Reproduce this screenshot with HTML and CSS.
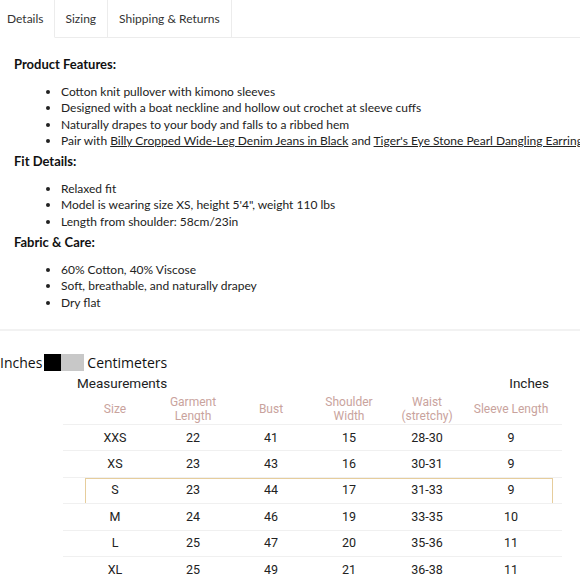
FILE: index.html
```html
<!DOCTYPE html>
<html>
<head>
<meta charset="utf-8">
<link rel="stylesheet" href="styles.css">
</head>
<body>
<div class="page">
  <div class="tabs">
    <div class="tab tab-first active">Details</div>
    <div class="tab">Sizing</div>
    <div class="tab">Shipping &amp; Returns</div>
    <div class="tab-rest"></div>
  </div>
  <div class="details">
    <h3 class="heading">Product Features:</h3>
    <ul class="list">
      <li>Cotton knit pullover with kimono sleeves</li>
      <li>Designed with a boat neckline and hollow out crochet at sleeve cuffs</li>
      <li>Naturally drapes to your body and falls to a ribbed hem</li>
      <li>Pair with <a href="#">Billy Cropped Wide-Leg Denim Jeans in Black</a> and <a href="#">Tiger's Eye Stone Pearl Dangling Earrings</a></li>
    </ul>
    <h3 class="heading">Fit Details:</h3>
    <ul class="list">
      <li>Relaxed fit</li>
      <li>Model is wearing size XS, height 5'4", weight 110 lbs</li>
      <li>Length from shoulder: 58cm/23in</li>
    </ul>
    <h3 class="heading">Fabric &amp; Care:</h3>
    <ul class="list">
      <li>60% Cotton, 40% Viscose</li>
      <li>Soft, breathable, and naturally drapey</li>
      <li>Dry flat</li>
    </ul>
  </div>
  <div class="divider"></div>
  <div class="units">
    <span>Inches</span>
    <span class="switch"><span class="sw-on"></span><span class="sw-off"></span></span>
    <span class="cm">Centimeters</span>
  </div>
  <div class="chart">
    <div class="chart-top">
      <span>Measurements</span>
      <span>Inches</span>
    </div>
    <div class="row head">
      <div>Size</div>
      <div>Garment<br>Length</div>
      <div>Bust</div>
      <div>Shoulder<br>Width</div>
      <div>Waist<br>(stretchy)</div>
      <div>Sleeve Length</div>
    </div>
    <div class="row"><div>XXS</div><div>22</div><div>41</div><div>15</div><div>28-30</div><div>9</div></div>
    <div class="row"><div>XS</div><div>23</div><div>43</div><div>16</div><div>30-31</div><div>9</div></div>
    <div class="row sel"><div>S</div><div>23</div><div>44</div><div>17</div><div>31-33</div><div>9</div></div>
    <div class="row"><div>M</div><div>24</div><div>46</div><div>19</div><div>33-35</div><div>10</div></div>
    <div class="row"><div>L</div><div>25</div><div>47</div><div>20</div><div>35-36</div><div>11</div></div>
    <div class="row"><div>XL</div><div>25</div><div>49</div><div>21</div><div>36-38</div><div>11</div></div>
  </div>
</div>
</body>
</html>
```
FILE: styles.css
```css
html, body {
  margin: 0;
  padding: 0;
  background: #fff;
}
body {
  width: 580px;
  height: 580px;
  overflow: hidden;
  font-family: Lato, "Open Sans", sans-serif;
  color: #222;
}
.page {
  width: 580px;
}
.tabs {
  display: flex;
  height: 38px;
}
.tab {
  box-sizing: border-box;
  height: 38px;
  line-height: 38px;
  font-size: 12px;
  color: #333;
  padding: 0 11px 0 11px;
  border-right: 1px solid #ececec;
  border-bottom: 1px solid #ececec;
  white-space: nowrap;
}
.tab-first {
  padding-left: 7px;
  padding-right: 10px;
}
.tab.active {
  border-bottom-color: #fff;
}
.tab-rest {
  flex: 1;
  border-bottom: 1px solid #ececec;
}
.details {
  padding: 18px 0 0 14px;
  white-space: nowrap;
}
.heading {
  margin: 0;
  font-family: Lato, sans-serif;
  font-weight: 700;
  font-size: 13px;
  line-height: 17px;
  color: #111;
}
.list {
  margin: 11px 0 4px 0;
  padding-left: 47px;
  font-size: 12px;
  line-height: 16.3px;
  color: #222;
}
.list a {
  color: #222;
  text-decoration: underline;
}
.divider {
  margin-top: 18px;
  height: 2px;
  background: #f2f2f2;
}
.units {
  display: flex;
  align-items: center;
  margin-top: 23px;
  font-family: "Open Sans", sans-serif;
  font-size: 14px;
  line-height: 18px;
  color: #111;
}
.switch {
  display: flex;
  margin: 0 3px 0 2px;
}
.sw-on {
  width: 17px;
  height: 17px;
  background: #000;
}
.sw-off {
  width: 23px;
  height: 17px;
  background: #c8c8c8;
}
.chart {
  margin: 2px 0 0 63px;
  width: 499px;
  font-family: Roboto, "Liberation Sans", sans-serif;
}
.chart-top {
  display: flex;
  justify-content: space-between;
  padding: 0 13px 0 14px;
  margin-bottom: 2px;
  font-size: 13.5px;
  line-height: 18px;
  color: #222;
}
.row {
  position: relative;
  display: grid;
  grid-template-columns: 78px 78px 78px 78px 78px 90px;
  padding: 0 19px 0 13px;
  height: 26.4px;
  align-items: center;
  text-align: center;
  font-size: 12.5px;
  line-height: 14px;
  color: #222;
  border-top: 1px solid #f0f0f0;
  box-sizing: border-box;
}
.row.head {
  border-top: none;
  height: 30px;
  color: #c9a39d;
  font-size: 12px;
  line-height: 14px;
}
.row.sel::after {
  content: "";
  position: absolute;
  left: 22px;
  right: 9px;
  top: 0;
  bottom: -1px;
  border: 1.5px solid #e6cd9c;
}
```
